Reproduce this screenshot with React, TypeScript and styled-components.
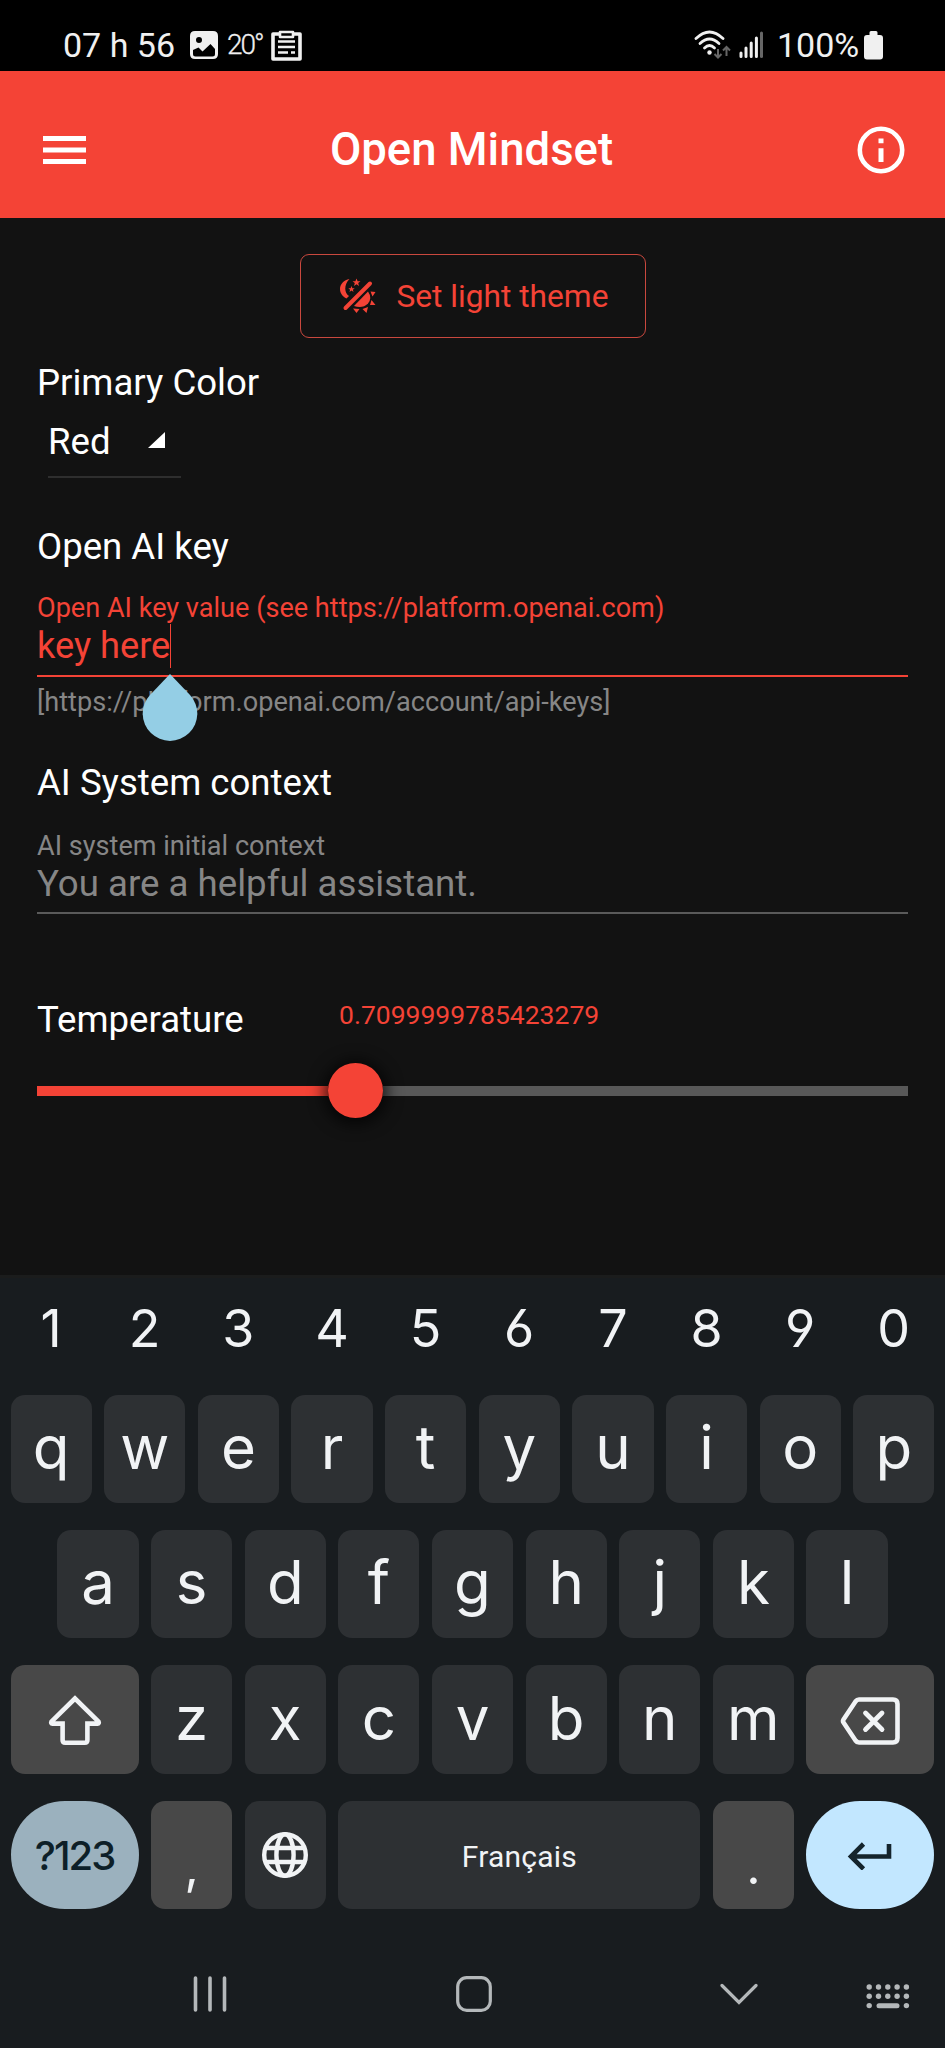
import React from "react";
import styled, { createGlobalStyle } from "styled-components";

const Global = createGlobalStyle`
  html, body { margin: 0; background: #121212; }
  * { box-sizing: border-box; }
`;

const RED = "#f44336";

const Screen = styled.div`
  width: 945px;
  height: 2048px;
  display: flex;
  flex-direction: column;
  background: #121212;
  font-family: Roboto, "Liberation Sans", sans-serif;
  color: #fff;
  overflow: hidden;
`;

const StatusBar = styled.div`
  height: 71px;
  flex: none;
  background: #000;
  color: #f0f0f0;
  display: flex;
  justify-content: space-between;
  padding: 21px 62px 0 63px;
`;

const StatusGroup = styled.div`
  display: flex;
  height: 48px;
  align-items: center;
`;

const StatusText = styled.span<{ $w: number }>`
  width: ${(p) => p.$w}px;
  font-size: 34px;
  line-height: 46px;
  white-space: nowrap;
`;

const WeatherText = styled.span`
  width: 43px;
  padding-left: 9px;
  font-size: 28px;
  font-weight: 300;
  letter-spacing: -2px;
  line-height: 46px;
  white-space: nowrap;
  -webkit-text-stroke: 0.3px currentColor;
`;

const Spacer = styled.span<{ $w: number }>`
  width: ${(p) => p.$w}px;
`;

const AppBar = styled.header`
  height: 147px;
  flex: none;
  background: ${RED};
  display: flex;
  align-items: center;
  justify-content: space-between;
  padding: 11px 40px 0 43px;
`;

const Title = styled.h1`
  margin: 0;
  font-size: 45.5px;
  font-weight: 500;
  line-height: 52px;
  white-space: nowrap;
`;

const Settings = styled.main`
  height: 1057px;
  flex: none;
  padding: 36px 37px 0;
  display: flex;
  flex-direction: column;
`;

const ThemeButton = styled.button`
  align-self: center;
  width: 346px;
  height: 84px;
  padding: 2px 0 0 38px;
  display: flex;
  align-items: center;
  gap: 20px;
  background: none;
  border: 1px solid #c9483e;
  border-radius: 9px;
  color: ${RED};
  font: 400 31.7px/40px Roboto, sans-serif;
  white-space: nowrap;
`;

const Heading = styled.h2<{ $top: number }>`
  margin: ${(p) => p.$top}px 0 0;
  height: 44px;
  font-size: 36.6px;
  font-weight: 400;
  line-height: 44px;
  white-space: nowrap;
`;

const Select = styled.div`
  margin: 14px 0 0 11px;
  width: 133px;
  height: 59px;
  padding: 1px 16px 0 0;
  display: flex;
  justify-content: space-between;
  font-size: 36.6px;
  line-height: 44px;
  border-bottom: 2px solid #2e2e2e;
`;

const SelectArrow = styled.svg`
  margin-top: 12px;
`;

const Field = styled.div<{ $top: number; $active?: boolean }>`
  margin-top: ${(p) => p.$top}px;
  color: ${(p) => (p.$active ? RED : "#868686")};
  border-bottom: 2px solid ${(p) => (p.$active ? RED : "#5a5a5a")};
  padding-bottom: ${(p) => (p.$active ? 7 : 6)}px;
`;

const FieldLabel = styled.div`
  font-size: 27.1px;
  line-height: 36px;
  height: 34px;
  white-space: nowrap;
`;

const FieldValue = styled.div<{ $size: number }>`
  display: flex;
  font-size: ${(p) => p.$size}px;
  line-height: 44px;
  height: 44px;
  white-space: nowrap;
`;

const Caret = styled.span`
  position: relative;
  width: 1px;
  height: 44px;
  background: ${RED};
`;

const CaretHandle = styled.svg`
  position: absolute;
  left: -28px;
  top: 50px;
`;

const Helper = styled.div`
  margin-top: 8px;
  height: 34px;
  font-size: 27.15px;
  line-height: 35px;
  color: #868686;
  white-space: nowrap;
`;

const TemperatureRow = styled.div`
  display: flex;
  margin-top: 84px;
  height: 44px;
`;

const TemperatureName = styled.h2`
  margin: 0;
  width: 302px;
  font-size: 36.6px;
  font-weight: 400;
  line-height: 44px;
`;

const TemperatureValue = styled.output`
  color: ${RED};
  font-size: 26.5px;
  line-height: 34px;
`;

const Slider = styled.div`
  display: flex;
  align-items: center;
  margin-top: 21px;
  height: 55px;
`;

const Track = styled.div<{ $filled?: boolean }>`
  height: 10px;
  ${(p) => (p.$filled ? "width: 291px" : "flex: 1")};
  background: ${(p) => (p.$filled ? RED : "#585858")};
`;

const Thumb = styled.div`
  width: 55px;
  height: 55px;
  border-radius: 50%;
  background: ${RED};
  box-shadow: 0 2px 16px 4px rgba(0, 0, 0, 0.75);
  position: relative;
`;

const Keyboard = styled.section`
  flex: 1;
  background: #181c1f;
  border-top: 3px solid #1b1c1c;
  padding: 0 10.5px;
  font-family: Inter, "Open Sans", sans-serif;
  font-feature-settings: "cv03", "cv04";
  color: #f1f3f5;
`;

const NumberRow = styled.div`
  display: flex;
  gap: 12.45px;
  height: 116.7px;
`;

const NumberKey = styled.div`
  width: 81.2px;
  text-align: center;
  font-size: 52px;
  line-height: 101px;
`;

const KeyRow = styled.div`
  display: flex;
  justify-content: center;
  gap: 12.45px;
  height: 108.5px;
  margin-bottom: 26.8px;
`;

type Tone = "plain" | "special" | "symbols" | "enter";
const tones: Record<Tone, string> = {
  plain: "#2d3033",
  special: "#484848",
  symbols: "#9bb1be",
  enter: "#c2e7ff",
};

const Key = styled.div<{ $units?: number; $tone?: Tone }>`
  flex: none;
  width: ${(p) => (p.$units ?? 1) * 93.65 - 12.45}px;
  height: 108.5px;
  display: flex;
  align-items: center;
  justify-content: center;
  border-radius: ${(p) => (p.$tone === "symbols" || p.$tone === "enter" ? 55 : 14)}px;
  background: ${(p) => tones[p.$tone ?? "plain"]};
  color: ${(p) => (p.$tone === "symbols" || p.$tone === "enter" ? "#0d1f28" : "#f1f3f5")};
`;

const Letter = styled.span`
  font-size: 60px;
  line-height: 80px;
  padding-bottom: 4px;
`;

const SymbolsLabel = styled.span`
  font-size: 40px;
  font-weight: 500;
  letter-spacing: -2px;
  line-height: 50px;
  padding-top: 3px;
`;

const SpaceLabel = styled.span`
  font-family: Roboto, sans-serif;
  font-size: 30px;
  letter-spacing: 0.2px;
  line-height: 40px;
  padding-top: 4px;
`;

const Punctuation = styled.span`
  font-size: 50px;
  line-height: 60px;
  padding-top: 22px;
`;

const NavBar = styled.nav`
  display: grid;
  grid-template-columns: 263.5px 264px 145.5px 44px;
  align-items: center;
  height: 40px;
  margin: 65px 0 0 182px;
`;

const Svg = ({ w, h, children }: { w: number; h: number; children: React.ReactNode }) => (
  <svg width={w} height={h} viewBox={`0 0 ${w} ${h}`} fill="none">
    {children}
  </svg>
);

const PictureIcon = () => (
  <Svg w={28} h={28}>
    <path
      fillRule="evenodd"
      fill="#f0f0f0"
      d="M5 0H23Q28 0 28 5V23Q28 28 23 28H5Q0 28 0 23V5Q0 0 5 0ZM9 6A3 3 0 1 0 9 12A3 3 0 1 0 9 6ZM3 19V23Q3 25.500 5.500 25.500H22.500Q25 25.500 25 23V18L20.500 13L12.500 20.500L8.500 16.500Z"
    />
  </Svg>
);

const ClipboardIcon = () => (
  <Svg w={31} h={31}>
    <path d="M9 4H2V29H29V4H22" stroke="#f0f0f0" strokeWidth="3.600" strokeLinejoin="round" />
    <path d="M9 2H22V7H9Z" stroke="#f0f0f0" strokeWidth="2.600" strokeLinejoin="round" />
    <path d="M7 11.500H24M7 17H24M7 22.500H17M20 22.500H24" stroke="#f0f0f0" strokeWidth="2.400" />
  </Svg>
);

const WifiIcon = () => (
  <Svg w={37} h={30}>
    <g stroke="#f0f0f0" strokeWidth="2.800" strokeLinecap="round">
      <path d="M2 8.500Q15.500 -4.500 29 8.500" />
      <path d="M6 13.500Q15.500 4.500 25 13.500" />
      <path d="M10.500 18Q15.500 13 20.500 18" />
    </g>
    <circle cx="15.500" cy="22.500" r="2.200" fill="#f0f0f0" />
    <path d="M24 19V27M20.500 24L24 27.500L27.500 24M32.500 26V17M29 20.500L32.500 17L36 20.500" stroke="#666" strokeWidth="2" />
  </Svg>
);

const SignalIcon = () => (
  <Svg w={26} h={28}>
    <path d="M2 25.500V22M7 25.500V17M12.200 25.500V12M17.400 25.500V7" stroke="#f0f0f0" strokeWidth="3" strokeLinecap="round" />
    <path d="M22.500 25.500V2" stroke="#666" strokeWidth="3" strokeLinecap="round" />
  </Svg>
);

const BatteryIcon = () => (
  <Svg w={19} h={29}>
    <path d="M5.500 1.500Q5.500 0 7 0H12Q13.500 0 13.500 1.500V4H16Q19 4 19 7V25.500Q19 28.500 16 28.500H3Q0 28.500 0 25.500V7Q0 4 3 4H5.500Z" fill="#f0f0f0" />
  </Svg>
);

const ThemeIcon = () => (
  <Svg w={38} h={38}>
    <g fill={RED}>
      <path d="M10.500 1C5 2 1 6 1 11C1 15 3.500 18.500 7.500 20.500L10 18C5.500 15 4.500 7 10.500 1Z" />
      <path d="M17.500 0.500L18.600 3.200L21.500 3.300L19.200 5.100L20 8L17.500 6.300L15 8L15.800 5.100L13.500 3.300L16.400 3.200Z" />
      <path d="M12.500 8L13.400 10.200L15.700 10.300L13.900 11.700L14.500 14L12.500 12.600L10.500 14L11.100 11.700L9.300 10.300L11.600 10.200Z" />
      <path d="M29 13.500Q33.500 20 29 25.500Q23.500 31 15 28Z" />
      <path d="M31.500 13.500L36.500 14L33.500 18.500ZM32.500 22L36.500 27L31 27ZM29 29L27.500 35L23.500 31ZM20.500 31L17.500 35L14 30.500Z" />
    </g>
    <path d="M31 5.500L6.500 30" stroke={RED} strokeWidth="4" strokeLinecap="round" />
  </Svg>
);

const letters = (row: string) =>
  row.split("").map((c) => (
    <Key key={c}>
      <Letter>{c}</Letter>
    </Key>
  ));

export default function App() {
  return (
    <Screen>
      <Global />
      <StatusBar>
        <StatusGroup>
          <StatusText $w={127}>07 h 56</StatusText>
          <PictureIcon />
          <WeatherText>20°</WeatherText>
          <Spacer $w={10} />
          <ClipboardIcon />
        </StatusGroup>
        <StatusGroup>
          <WifiIcon />
          <Spacer $w={8} />
          <SignalIcon />
          <Spacer $w={12} />
          <StatusText $w={87}>100%</StatusText>
          <BatteryIcon />
        </StatusGroup>
      </StatusBar>

      <AppBar>
        <Svg w={43} h={30}>
          <path d="M0 3.500H43M0 15H43M0 26.500H43" stroke="#fff" strokeWidth="5" />
        </Svg>
        <Title>Open Mindset</Title>
        <Svg w={48} h={48}>
          <circle cx="24" cy="24" r="21.200" stroke="#fff" strokeWidth="4.600" />
          <path d="M24 12.500V17.300M24 22.300V36" stroke="#fff" strokeWidth="5" />
        </Svg>
      </AppBar>

      <Settings>
        <ThemeButton>
          <ThemeIcon />
          Set light theme
        </ThemeButton>

        <Heading $top={23}>Primary Color</Heading>
        <Select>
          Red
          <SelectArrow width="17" height="17" viewBox="0 0 17 17">
            <path d="M17 0V16H0Z" fill="#fff" />
          </SelectArrow>
        </Select>

        <Heading $top={47}>Open AI key</Heading>
        <Field $top={21} $active>
          <FieldLabel>Open AI key value (see https://platform.openai.com)</FieldLabel>
          <FieldValue $size={36.2}>
            key here
            <Caret>
              <CaretHandle width="56" height="68" viewBox="0 0 56 68">
                <path d="M28 0L48 21A27.300 27.300 0 1 1 8 21Z" fill="#94cee5" />
              </CaretHandle>
            </Caret>
          </FieldValue>
        </Field>
        <Helper>[https://platform.openai.com/account/api-keys]</Helper>

        <Heading $top={42}>AI System context</Heading>
        <Field $top={23}>
          <FieldLabel>AI system initial context</FieldLabel>
          <FieldValue $size={36.65}>You are a helpful assistant.</FieldValue>
        </Field>

        <TemperatureRow>
          <TemperatureName>Temperature</TemperatureName>
          <TemperatureValue>0.7099999785423279</TemperatureValue>
        </TemperatureRow>
        <Slider>
          <Track $filled />
          <Thumb />
          <Track />
        </Slider>
      </Settings>

      <Keyboard>
        <NumberRow>
          {"1234567890".split("").map((n) => (
            <NumberKey key={n}>{n}</NumberKey>
          ))}
        </NumberRow>
        <KeyRow>{letters("qwertyuiop")}</KeyRow>
        <KeyRow>{letters("asdfghjkl")}</KeyRow>
        <KeyRow>
          <Key $units={1.5} $tone="special">
            <Svg w={54} h={54}>
              <path
                d="M27 5.500L3.500 28.500Q2.500 30.600 4.500 30.600H14.600V47Q14.600 49.700 17.200 49.700H36.800Q39.400 49.700 39.400 47V30.600H49.500Q51.500 30.600 50.500 28.500Z"
                stroke="#f1f3f5"
                strokeWidth="4.600"
              />
            </Svg>
          </Key>
          {letters("zxcvbnm")}
          <Key $units={1.5} $tone="special">
            <Svg w={60} h={50}>
              <path d="M19 4.500H53Q57.500 4.500 57.500 9V43Q57.500 47.500 53 47.500H19Q17 47.500 15.500 45.500L3.500 27.500Q2.500 26 3.500 24.500L15.500 6.500Q17 4.500 19 4.500Z" stroke="#f1f3f5" strokeWidth="4.600" />
              <path d="M25.500 18L42 34.500M42 18L25.500 34.500" stroke="#f1f3f5" strokeWidth="4.800" strokeLinecap="round" />
            </Svg>
          </Key>
        </KeyRow>
        <KeyRow>
          <Key $units={1.5} $tone="symbols">
            <SymbolsLabel>?123</SymbolsLabel>
          </Key>
          <Key $tone="special">
            <Punctuation>,</Punctuation>
          </Key>
          <Key>
            <Svg w={48} h={48}>
              <g stroke="#f1f3f5" strokeWidth="4.400">
                <circle cx="24" cy="24" r="20.800" />
                <ellipse cx="24" cy="24" rx="8.600" ry="20.800" />
                <path d="M4 17H44M4 31H44" />
              </g>
            </Svg>
          </Key>
          <Key $units={4}>
            <SpaceLabel>Français</SpaceLabel>
          </Key>
          <Key $tone="special">
            <Punctuation>.</Punctuation>
          </Key>
          <Key $units={1.5} $tone="enter">
            <Svg w={46} h={30}>
              <path d="M16.500 4L4 16.500L16.500 29M4 16.500H42V4" stroke="#14242c" strokeWidth="4.600" />
            </Svg>
          </Key>
        </KeyRow>
        <NavBar>
          <Svg w={36} h={36}>
            <path d="M2.500 2V34M17 2V34M31.500 2V34" stroke="#b4b8ba" strokeWidth="3.600" strokeLinecap="round" />
          </Svg>
          <Svg w={36} h={36}>
            <rect x="1.700" y="1.700" width="32.600" height="32.600" rx="9" stroke="#b4b8ba" strokeWidth="3.200" />
          </Svg>
          <Svg w={38} h={36}>
            <path d="M2 9.500L19 26.500L36 9.500" stroke="#b4b8ba" strokeWidth="3.200" strokeLinecap="round" />
          </Svg>
          <Svg w={44} h={36}>
            <g fill="#b4b8ba">
              {[0, 1, 2, 3, 4].map((c) => (
                <React.Fragment key={c}>
                  <circle cx={3.2 + c * 9.3} cy={11} r="2.700" />
                  <circle cx={3.2 + c * 9.3} cy={20.3} r="2.700" />
                </React.Fragment>
              ))}
              <circle cx="3.200" cy="29.600" r="2.700" />
              <circle cx="40.400" cy="29.600" r="2.700" />
              <rect x="10.500" y="27.200" width="23" height="5" rx="2.500" />
            </g>
          </Svg>
        </NavBar>
      </Keyboard>
    </Screen>
  );
}
